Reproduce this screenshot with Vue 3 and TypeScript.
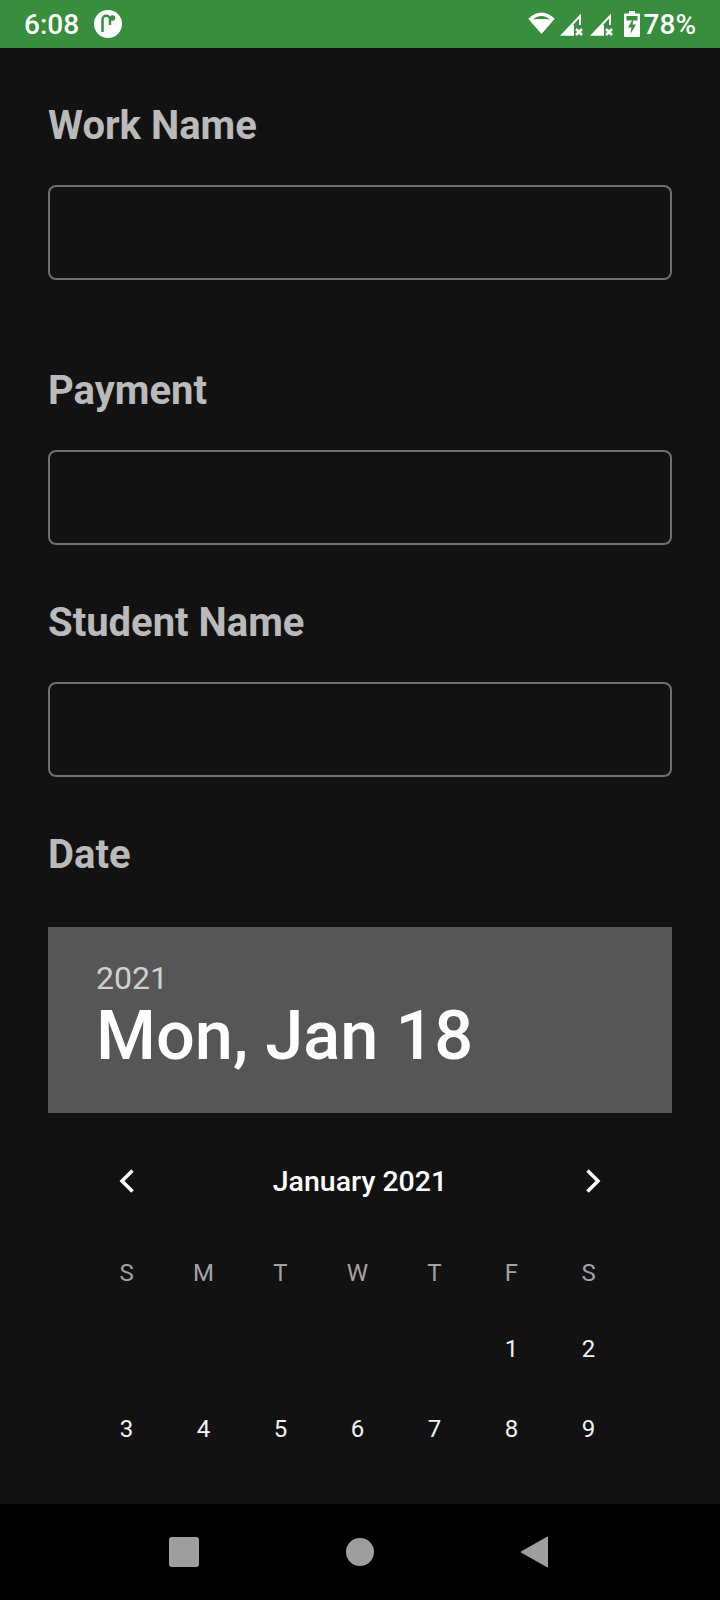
<script setup lang="ts">
const fields = ['Work Name', 'Payment', 'Student Name'];
const weekDays = ['S', 'M', 'T', 'W', 'T', 'F', 'S'];
const days = ['', '', '', '', '', '1', '2', '3', '4', '5', '6', '7', '8', '9'];
</script>

<template>
  <div class="screen">
    <div class="status-bar">
      <div class="status-left">
        <span class="time">6:08</span>
        <svg class="app-icon" width="28" height="28" viewBox="0 0 28 28">
          <circle cx="14" cy="14" r="14" fill="#fff" />
          <path d="M8.500 22V9.500a3.750 3.750 0 0 1 7.500 0V15" fill="none" stroke="#388e3c" stroke-width="2.500" />
          <circle cx="18.500" cy="8" r="2.800" fill="#388e3c" />
        </svg>
      </div>
      <div class="status-right">
        <!-- wifi -->
        <svg width="27" height="28" viewBox="0 0 27 28">
          <path
            fill-rule="evenodd"
            d="M0.300 8.800C4 5 8.500 2.500 13.500 2.500S23 5 26.700 8.800L13.500 24zM5 9.500C7.500 7.500 10.300 6 13.500 6S19.500 7.500 22 9.500C19.500 9 16.500 9 13.500 9S7.500 9 5 9.500z"
            fill="#fff"
          />
        </svg>
        <!-- signal, no data -->
        <svg class="signal-a" width="24" height="28" viewBox="0 0 24 28">
          <path fill-rule="evenodd" d="M0 25.800L21 3.500V15H14V25.800zM19 8.500L13 15H19z" fill="#fff" />
          <path d="M16 19l6 6M22 19l-6 6" stroke="#fff" stroke-width="2.600" />
        </svg>
        <svg class="signal-b" width="24" height="28" viewBox="0 0 24 28">
          <path fill-rule="evenodd" d="M0 25.800L21 3.500V15H14V25.800zM19 8.500L13 15H19z" fill="#fff" />
          <path d="M16 19l6 6M22 19l-6 6" stroke="#fff" stroke-width="2.600" />
        </svg>
        <!-- battery, charging -->
        <svg class="battery-icon" width="16" height="28" viewBox="0 0 16 28">
          <path
            fill-rule="evenodd"
            d="M5 1h6v2.500h4a1 1 0 0 1 1 1V26a1 1 0 0 1-1 1H1a1 1 0 0 1-1-1V4.500a1 1 0 0 1 1-1h4zM2.500 6v4.500h11V6z"
            fill="#fff"
          />
          <path d="M9.500 8L4 17.500h3.400l-1 6.500 5.600-9.500H8.600z" fill="#388e3c" />
        </svg>
        <span class="battery">78%</span>
      </div>
    </div>

    <div class="content">
      <div v-for="field in fields" :key="field" class="field">
        <h2 class="label">{{ field }}</h2>
        <div class="input"></div>
      </div>

      <h2 class="label date-label">Date</h2>

      <div class="picker">
        <div class="picker-header">
          <div class="year">2021</div>
          <div class="selected">Mon, Jan 18</div>
        </div>
        <div class="month-row">
          <svg width="15" height="24" viewBox="0 0 15 24">
            <path d="M13.500 1.500L3 12l10.500 10.500" fill="none" stroke="#fff" stroke-width="3.500" />
          </svg>
          <span class="month">January 2021</span>
          <svg width="15" height="24" viewBox="0 0 15 24">
            <path d="M1.500 1.500L12 12 1.500 22.500" fill="none" stroke="#fff" stroke-width="3.500" />
          </svg>
        </div>
        <div class="week">
          <span v-for="(d, i) in weekDays" :key="i">{{ d }}</span>
        </div>
        <div class="days">
          <span v-for="(d, i) in days" :key="i">{{ d }}</span>
        </div>
      </div>
    </div>

    <div class="nav-bar">
      <span class="nav-square"></span>
      <span class="nav-circle"></span>
      <svg width="28" height="32" viewBox="0 0 28 32">
        <path d="M27.500 1v30L1 16z" fill="#9e9e9e" stroke="#9e9e9e" stroke-linejoin="round" />
      </svg>
    </div>
  </div>
</template>

<style scoped>
.screen {
  width: 720px;
  height: 1600px;
  display: flex;
  flex-direction: column;
  overflow: hidden;
  background: #121212;
  font-family: Roboto, sans-serif;
}

.status-bar {
  height: 48px;
  flex: none;
  display: flex;
  justify-content: space-between;
  align-items: center;
  padding: 0 24px;
  background: #388e3c;
  color: #fff;
}

.status-left,
.status-right {
  display: flex;
  align-items: center;
}

.time {
  font-size: 28px;
  font-weight: 500;
}

.app-icon {
  margin-left: 15px;
}

.signal-a {
  margin-left: 5px;
}

.signal-b {
  margin-left: 6px;
}

.battery-icon {
  margin-left: 10px;
}

.battery {
  margin-left: 4px;
  font-size: 28px;
  font-weight: 500;
}

.content {
  flex: 1;
  min-height: 0;
  overflow: hidden;
  padding: 0 48px;
}

.label {
  margin: 0;
  font-size: 40px;
  line-height: 46px;
  font-weight: 700;
  color: #bababa;
}

.field {
  padding-top: 55px;
}

.field:nth-child(2) {
  padding-top: 88px;
}

.input {
  height: 95px;
  margin-top: 36px;
  box-sizing: border-box;
  border: 2px solid #6f6f6f;
  border-radius: 8px;
}

.date-label {
  margin-top: 55px;
}

.picker {
  margin-top: 49px;
}

.picker-header {
  height: 186px;
  box-sizing: border-box;
  padding: 33px 48px 0;
  background: #565656;
}

.year {
  font-size: 32px;
  line-height: 36px;
  color: #d0d0d0;
}

.selected {
  font-size: 68.500px;
  line-height: 80px;
  font-weight: 500;
  color: #fff;
}

.month-row {
  display: flex;
  align-items: center;
  justify-content: space-between;
  height: 48px;
  margin-top: 44px;
  padding: 0 71px;
}

.month {
  font-size: 28.500px;
  font-weight: 500;
  color: #fff;
}

.week,
.days {
  display: grid;
  grid-template-columns: repeat(7, 77px);
  margin-left: 40px;
  text-align: center;
}

.week {
  margin-top: 52px;
  font-size: 24px;
  line-height: 32px;
  color: #a3a3a3;
}

.days {
  margin-top: 36px;
  grid-auto-rows: 80px;
  font-size: 24px;
  line-height: 48px;
  color: #f2f2f2;
}

.nav-bar {
  height: 96px;
  flex: none;
  display: flex;
  align-items: center;
  justify-content: space-between;
  padding: 0 172px 0 169px;
  background: #000;
}

.nav-square {
  width: 30px;
  height: 30px;
  border-radius: 3px;
  background: #9e9e9e;
}

.nav-circle {
  width: 28px;
  height: 28px;
  border-radius: 50%;
  background: #9e9e9e;
}
</style>

<style>
html,
body {
  margin: 0;
  background: #121212;
}
</style>
